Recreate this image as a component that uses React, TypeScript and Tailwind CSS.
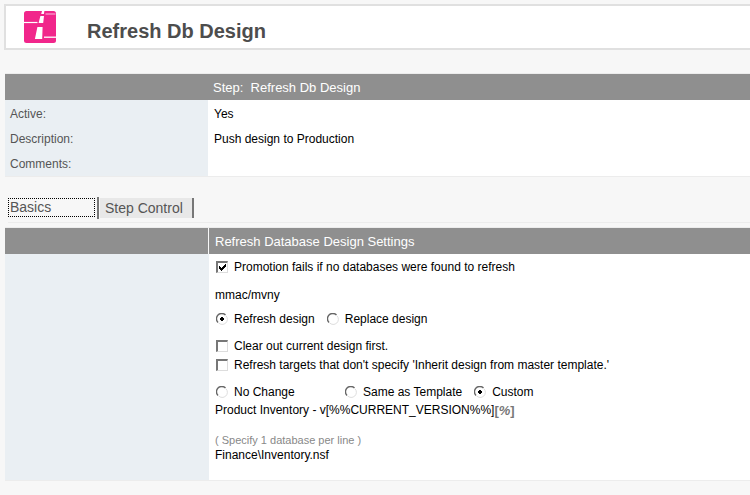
import { useState } from "react";
import type { ReactNode } from "react";

const checkStyle =
  "m-0 grid size-3 shrink-0 appearance-none place-items-center border-t-2 border-l-2 border-r border-b border-t-[#777777] border-l-[#777777] border-r-[#dddddd] border-b-[#dddddd] bg-white";

function Check({ label, initial }: { label: string; initial?: boolean }) {
  const [on, setOn] = useState(!!initial);
  return (
    <label className="flex h-[18px] items-center gap-1.5 pl-px">
      <span className="grid size-3 shrink-0">
        <input
          type="checkbox"
          checked={on}
          onChange={() => setOn(!on)}
          className={checkStyle + " col-start-1 row-start-1"}
        />
        {on && (
          <svg
            viewBox="0 0 12 12"
            className="pointer-events-none col-start-1 row-start-1 size-3"
            shapeRendering="crispEdges"
          >
            <path
              d="M3 5h1v3H3zM4 6h1v3H4zM5 7h1v3H5zM6 6h1v3H6zM7 5h1v3H7zM8 4h1v3H8zM9 3h1v3H9z"
              fill="#000"
            />
          </svg>
        )}
      </span>
      <span>{label}</span>
    </label>
  );
}

interface RadioProps {
  name: string;
  label: string;
  value: string;
  onPick: (label: string) => void;
}

function Radio({ name, label, value, onPick }: RadioProps) {
  const on = value === label;
  return (
    <label className="flex h-[18px] items-center gap-1.5 pl-px">
      <span className="grid size-3 shrink-0">
        <input
          type="radio"
          name={name}
          checked={on}
          onChange={() => onPick(label)}
          className="col-start-1 row-start-1 m-0 size-3 appearance-none"
        />
        <svg viewBox="0 0 12 12" className="pointer-events-none col-start-1 row-start-1 size-3">
          <path d="M2 9.5A5 5 0 0 1 9.5 2" fill="none" stroke="#666" strokeWidth="1.4" />
          <path d="M10 2.8A5 5 0 0 1 2.5 9.8" fill="none" stroke="#ddd" strokeWidth="1" />
          {on && <path d="M5 4h2v1h1v2H7v1H5V7H4V5h1z" fill="#000" shapeRendering="crispEdges" />}
        </svg>
      </span>
      <span>{label}</span>
    </label>
  );
}

function Logo() {
  return (
    <svg viewBox="0 0 32 32" className="size-8 shrink-0" aria-hidden="true">
      <rect width="32" height="32" rx="2.5" fill="#f1268b" />
      <path d="M0 11.5H13.5" stroke="#fff" strokeWidth="1.2" />
      <path d="M21.5 3H31.5" stroke="#f886bf" strokeWidth="1.6" />
      <path d="M20 26.2H32" stroke="#fff" strokeWidth="1.3" />
      <path
        d="M18 0H20.4L19.9 3H17.2zM16.4 5H20L19.2 12H14.6zM13.4 16H18.6L18.2 28H10.9z"
        fill="#fff"
      />
    </svg>
  );
}

function InfoRow({ label, children }: { label: string; children?: ReactNode }) {
  return (
    <tr className="h-[25px] align-top last:h-[27px]">
      <th
        scope="row"
        className="bg-[#eaeff3] pt-[7px] pl-[5px] text-left font-normal text-[#555555]"
      >
        {label}
      </th>
      <td className="bg-white pt-[7px] pl-1.5 text-black">{children}</td>
    </tr>
  );
}

export default function App() {
  const [tab, setTab] = useState("Basics");
  const [mode, setMode] = useState("Refresh design");
  const [title, setTitle] = useState("Custom");

  return (
    <div className="min-h-screen overflow-hidden bg-[#f7f7f7] pt-1 pl-1 font-['Liberation_Sans',Arial,sans-serif] text-[12px] leading-[15px] text-black">
      <header className="flex h-[46px] items-center border-2 border-r-0 border-[#e0e0e0] bg-white pl-[18px]">
        <Logo />
        <h1 className="pt-2 pl-[31px] text-[20px] leading-6 font-bold text-[#4d4d4d]">
          Refresh Db Design
        </h1>
      </header>

      <table className="mt-[23px] ml-px w-full table-fixed border-collapse border-y border-[#ececec]">
        <colgroup>
          <col className="w-[203px]" />
          <col />
        </colgroup>
        <thead>
          <tr className="h-[26px] bg-[#8f8f8f] text-[13px] text-white">
            <td />
            <th scope="col" className="pt-px pl-[5px] text-left font-normal whitespace-pre">
              {"Step:  Refresh Db Design"}
            </th>
          </tr>
        </thead>
        <tbody>
          <InfoRow label="Active:">Yes</InfoRow>
          <InfoRow label="Description:">Push design to Production</InfoRow>
          <InfoRow label="Comments:" />
        </tbody>
      </table>

      <div
        role="tablist"
        className="mt-5 ml-1 flex h-[26px] items-start border-b border-[#ececec] text-[14px] text-[#555555]"
      >
        <button
          role="tab"
          aria-selected={tab === "Basics"}
          onClick={() => setTab("Basics")}
          className="mt-px h-[19px] w-[87px] border border-dotted border-black pl-px text-left"
        >
          Basics
        </button>
        <span className="ml-0.5 h-[22px] w-0.5 bg-[#777777]" />
        <button
          role="tab"
          aria-selected={tab === "Step Control"}
          onClick={() => setTab("Step Control")}
          className="mt-px ml-px h-5 w-[94px] border-r-2 border-[#777777] bg-[#e8e8e8] pt-px pl-[5px] text-left"
        >
          Step Control
        </button>
      </div>

      <section className="mt-1 ml-px border-y border-[#ececec]">
        <div className="grid grid-cols-[203px_1fr] bg-[#8f8f8f]">
          <div />
          <h2 className="h-[26px] border-l border-[#f7f7f7] pl-1.5 text-[13px] leading-[27px] text-white">
            Refresh Database Design Settings
          </h2>
        </div>
        <div className="grid grid-cols-[204px_1fr]">
          <div className="bg-[#eaeff3]" />
          <div className="bg-white pt-1 pb-[17px] pl-1.5">
            <Check label="Promotion fails if no databases were found to refresh" initial />
            <p className="mt-2.5 leading-[18px]">mmac/mvny</p>
            <div className="mt-1.5 flex gap-[11px]">
              <Radio name="mode" label="Refresh design" value={mode} onPick={setMode} />
              <Radio name="mode" label="Replace design" value={mode} onPick={setMode} />
            </div>
            <div className="mt-[9px] flex flex-col gap-px">
              <Check label="Clear out current design first." />
              <Check label="Refresh targets that don't specify 'Inherit design from master template.'" />
            </div>
            <div className="mt-[9px] flex gap-[11px]">
              <div className="w-[118px]">
                <Radio name="title" label="No Change" value={title} onPick={setTitle} />
              </div>
              <Radio name="title" label="Same as Template" value={title} onPick={setTitle} />
              <Radio name="title" label="Custom" value={title} onPick={setTitle} />
            </div>
            <div className="flex h-5 items-start leading-[18px]">
              <span>Product Inventory - v[%%CURRENT_VERSION%%]</span>
              <button className="pt-px text-[13px] font-bold text-[#777777]" aria-label="Insert variable">
                [<i>%</i>]
              </button>
            </div>
            <p className="mt-3 text-[11px] text-[#888888]">( Specify 1 database per line )</p>
            <p>Finance\Inventory.nsf</p>
          </div>
        </div>
      </section>
    </div>
  );
}
